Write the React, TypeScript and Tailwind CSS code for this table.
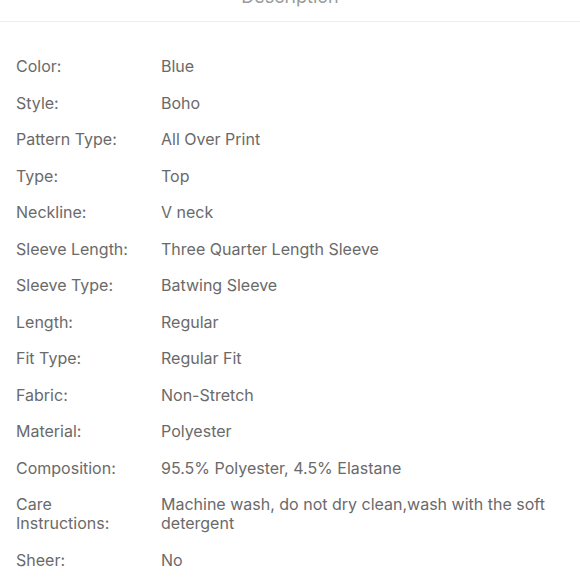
import React from 'react';

const specs: [string, string][] = [
  ['Color:', 'Blue'],
  ['Style:', 'Boho'],
  ['Pattern Type:', 'All Over Print'],
  ['Type:', 'Top'],
  ['Neckline:', 'V neck'],
  ['Sleeve Length:', 'Three Quarter Length Sleeve'],
  ['Sleeve Type:', 'Batwing Sleeve'],
  ['Length:', 'Regular'],
  ['Fit Type:', 'Regular Fit'],
  ['Fabric:', 'Non-Stretch'],
  ['Material:', 'Polyester'],
  ['Composition:', '95.5% Polyester, 4.5% Elastane'],
  ['Care Instructions:', 'Machine wash, do not dry clean,wash with the soft detergent'],
  ['Sheer:', 'No'],
];

function App() {
  return (
    <div className="min-h-screen bg-white font-['Inter',sans-serif] overflow-hidden">
      <div className="h-[22px] border-b border-[#ededed] flex justify-center">
        <span className="-mt-[14px] text-[18px] leading-[22px] text-[#9a9a9a]">Description</span>
      </div>

      <div className="pt-[35px] flex flex-col gap-[17.5px] text-[16px] leading-[19px] text-[#6a6a6a]">
        {specs.map(([label, value]) => (
          <div key={label} className="flex">
            <div className="w-[161px] shrink-0 pl-4 pr-4">{label}</div>
            <div className="flex-1 pr-4">{value}</div>
          </div>
        ))}
      </div>
    </div>
  );
}

export default App;
